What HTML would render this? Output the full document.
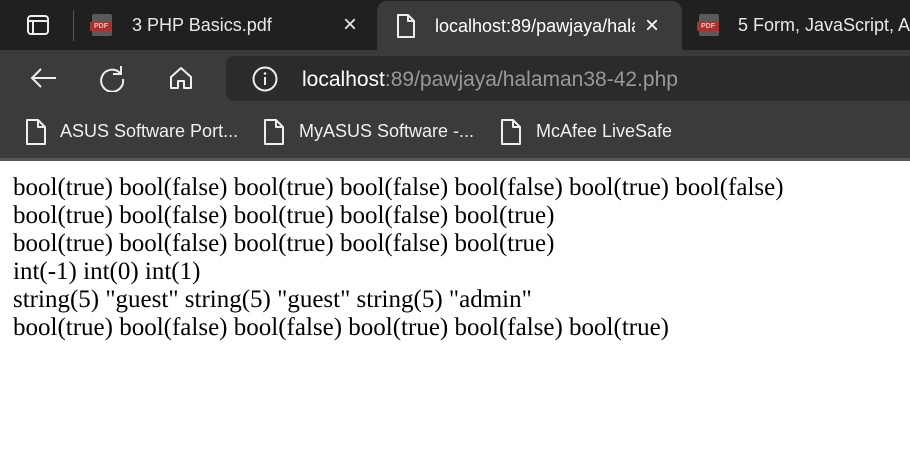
<!DOCTYPE html>
<html><head><meta charset="utf-8"><style>
*{margin:0;padding:0;box-sizing:border-box}
body{width:910px;height:476px;overflow:hidden;background:#fff;font-family:"Liberation Sans",sans-serif;position:relative}
.tabs{position:absolute;left:0;top:0;width:910px;height:50px;background:#202020}
.tab{position:absolute;top:0;height:50px;color:#e8e8e8;font-size:18px;line-height:50px}
.active{left:377px;width:305px;background:#3b3b3b;border-radius:10px 10px 0 0;top:1px;height:49px}
.tb{position:absolute;left:0;top:50px;width:910px;height:55px;background:#3b3b3b}
.addr{position:absolute;left:226px;top:6px;width:700px;height:45px;background:#2b2b2b;border-radius:8px}
.bm{position:absolute;left:0;top:105px;width:910px;height:53px;background:#3b3b3b;color:#f0f0f0;font-size:18px}
.bord{position:absolute;left:0;top:158px;width:910px;height:3px;background:#555}
.content{position:absolute;left:13px;top:174px;font-family:"Liberation Serif",serif;font-size:25px;line-height:28px;color:#000;white-space:nowrap}
svg{position:absolute}
.pdf{position:absolute;width:20px;height:22px;background:#5a5a5a;border-radius:2px}
.pdf b{position:absolute;left:-2px;top:8px;width:22px;height:9px;background:#a8322d;color:#e8c0c0;font-size:7px;line-height:9px;text-align:center;font-weight:bold}
</style></head><body>
<div class="tabs">
<svg style="left:26px;top:14px" width="24" height="22" viewBox="0 0 24 22"><rect x="2" y="2" width="20" height="18" rx="3" fill="none" stroke="#eee" stroke-width="2"/><line x1="2" y1="7" x2="22" y2="7" stroke="#eee" stroke-width="2"/><line x1="7" y1="7" x2="7" y2="20" stroke="#eee" stroke-width="2"/></svg>
<div style="position:absolute;left:73px;top:10px;width:1px;height:31px;background:#555"></div>
<div class="pdf" style="left:92px;top:14px"><b>PDF</b></div>
<div class="tab" style="left:132px">3 PHP Basics.pdf</div>
<div class="tab" style="left:343px;font-size:24px">×</div>
<div class="tab active">
<svg style="left:18px;top:12px" width="22" height="26" viewBox="0 0 22 26"><path d="M3 2h10l6 6v16H3z M13 2v6h6" fill="none" stroke="#eee" stroke-width="2" stroke-linejoin="round"/></svg>
<span style="position:absolute;left:58px;width:200px;overflow:hidden;white-space:nowrap;color:#fff">localhost:89/pawjaya/halaman</span>
<span style="position:absolute;left:268px;font-size:24px;color:#fff">×</span>
</div>
<div class="pdf" style="left:699px;top:14px"><b>PDF</b></div>
<div class="tab" style="left:738px;white-space:nowrap">5 Form, JavaScript, A...</div>
</div>
<div class="tb">
<svg style="left:28px;top:16px" width="30" height="24" viewBox="0 0 30 24"><path d="M28 12H4M13 3l-9 9 9 9" fill="none" stroke="#eee" stroke-width="2"/></svg>
<svg style="left:98px;top:14px" width="28" height="28" viewBox="0 0 28 28"><path d="M22 9A11 11 0 1 0 25 15" fill="none" stroke="#eee" stroke-width="2"/><path d="M23 2v8h-8" fill="none" stroke="#eee" stroke-width="2"/></svg>
<svg style="left:168px;top:15px" width="26" height="26" viewBox="0 0 26 26"><path d="M3 12L13 3l10 9v11h-7v-7h-6v7H3z" fill="none" stroke="#eee" stroke-width="2" stroke-linejoin="round"/></svg>
<div class="addr">
<svg style="left:26px;top:10px" width="26" height="26" viewBox="0 0 26 26"><circle cx="13" cy="13" r="11.5" fill="none" stroke="#eee" stroke-width="2"/><line x1="13" y1="11" x2="13" y2="19" stroke="#eee" stroke-width="2"/><circle cx="13" cy="7.5" r="1.3" fill="#eee"/></svg>
<div style="position:absolute;left:76px;top:1px;line-height:45px;font-size:21px;color:#999"><span style="color:#fff">localhost</span>:89/pawjaya/halaman38-42.php</div>
</div>
</div>
<div class="bm">
<svg style="left:25px;top:13px" width="22" height="28" viewBox="0 0 22 28"><path d="M2 2h11l7 7v17H2z M13 2v7h7" fill="none" stroke="#eee" stroke-width="2" stroke-linejoin="round"/></svg>
<div style="position:absolute;left:60px;line-height:52px">ASUS Software Port...</div>
<svg style="left:263px;top:13px" width="22" height="28" viewBox="0 0 22 28"><path d="M2 2h11l7 7v17H2z M13 2v7h7" fill="none" stroke="#eee" stroke-width="2" stroke-linejoin="round"/></svg>
<div style="position:absolute;left:299px;line-height:52px">MyASUS Software -...</div>
<svg style="left:500px;top:13px" width="22" height="28" viewBox="0 0 22 28"><path d="M2 2h11l7 7v17H2z M13 2v7h7" fill="none" stroke="#eee" stroke-width="2" stroke-linejoin="round"/></svg>
<div style="position:absolute;left:536px;line-height:52px">McAfee LiveSafe</div>
</div>
<div class="bord"></div>
<div class="content">bool(true) bool(false) bool(true) bool(false) bool(false) bool(true) bool(false)<br>bool(true) bool(false) bool(true) bool(false) bool(true)<br>bool(true) bool(false) bool(true) bool(false) bool(true)<br>int(-1) int(0) int(1)<br>string(5) "guest" string(5) "guest" string(5) "admin"<br>bool(true) bool(false) bool(false) bool(true) bool(false) bool(true)</div>
</body></html>
